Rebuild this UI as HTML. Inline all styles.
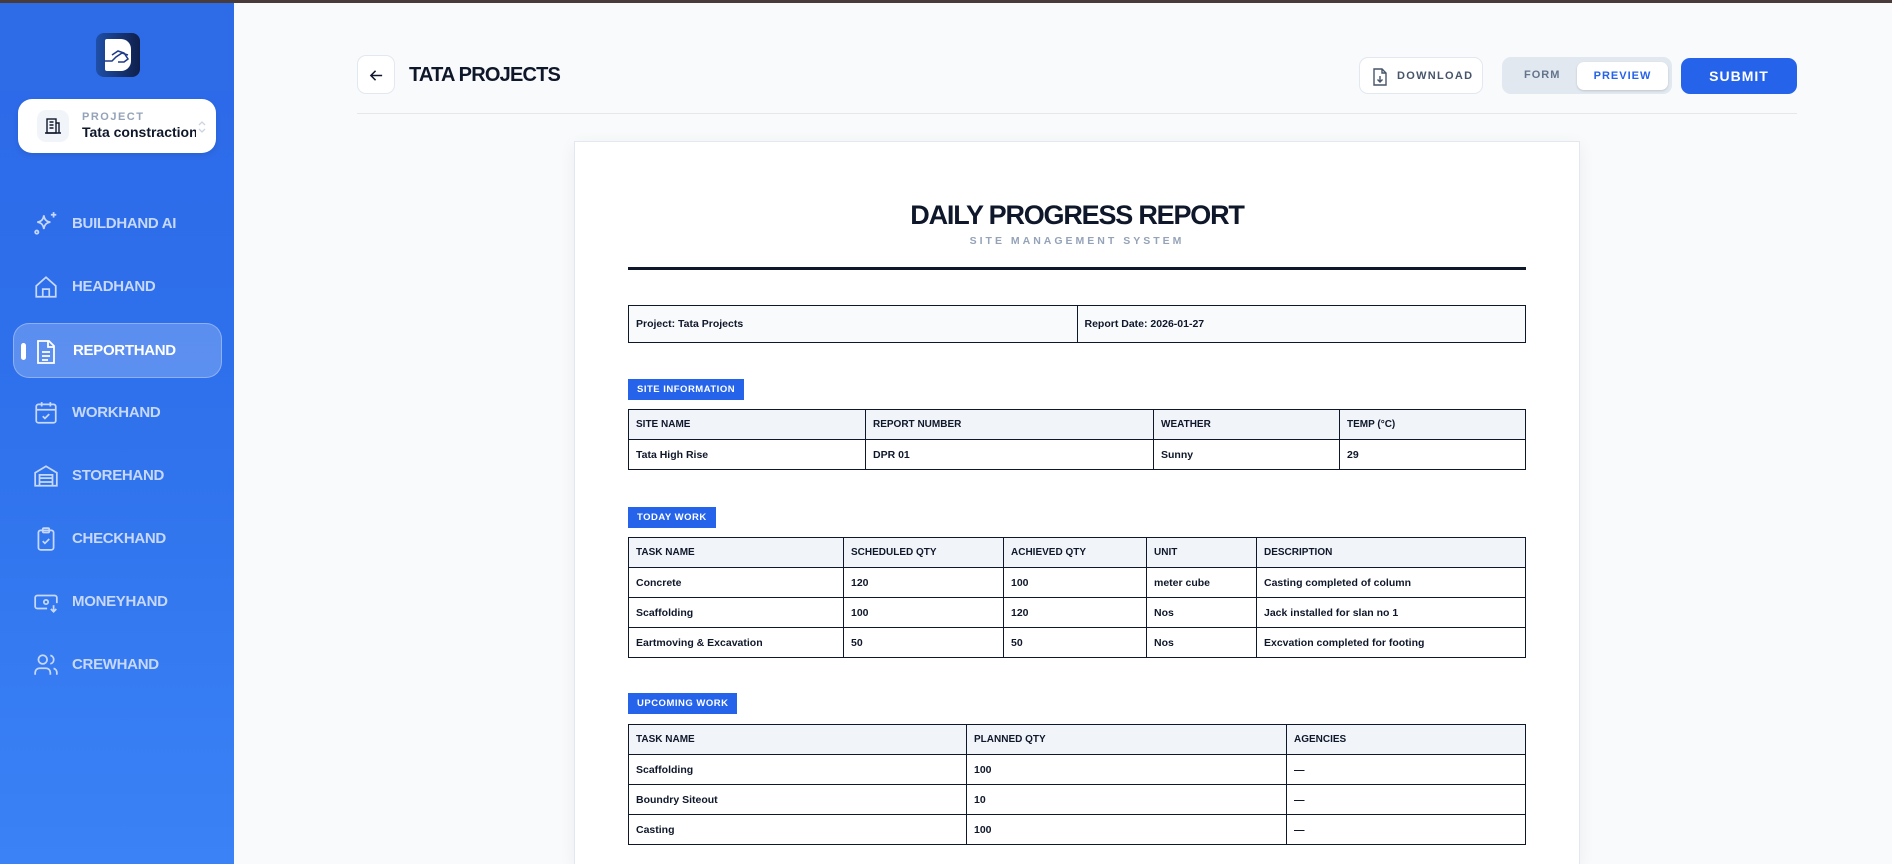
<!DOCTYPE html>
<html><head><meta charset="utf-8"><style>
*{box-sizing:border-box;margin:0;padding:0}
html{width:1892px;height:864px;overflow:hidden}
body{width:1892px;height:864px;overflow:hidden;background:#f8fafc;font-family:"Liberation Sans",Arial,sans-serif;position:relative}
.topbar{position:absolute;left:0;top:0;width:1892px;height:3px;background:#4a3b3b}
.side{position:absolute;left:0;top:3px;width:234px;height:861px;background:linear-gradient(180deg,#2c68e8 0%,#2f72ec 50%,#3b82f6 100%)}
.side .band{position:absolute;left:0;top:0;width:234px;height:88px;background:#2e6be6}
.logo{position:absolute;left:96px;top:30px;width:44px;height:44px;border-radius:8px;background:linear-gradient(90deg,#1e4fa8,#0f1f4a);overflow:hidden}
.proj{position:absolute;left:18px;top:96px;width:198px;height:54px;background:#fff;border-radius:14px;box-shadow:0 2px 6px rgba(0,0,0,.1)}
.proj .ic{position:absolute;left:19px;top:11px;width:32px;height:32px;border-radius:9px;background:#f1f5f9}
.proj .l1{position:absolute;left:64px;top:12px;font-size:11px;font-weight:bold;letter-spacing:1.5px;color:#94a3b8}
.proj .l2{position:absolute;left:64px;top:25px;font-size:14px;font-weight:bold;color:#0f172a;width:114px;overflow:hidden;white-space:nowrap}
.nav{position:absolute;left:0;width:234px;height:40px}
.nav svg{position:absolute;left:33px;top:8px}
.nav span{position:absolute;left:72px;top:12px;font-size:15px;font-weight:bold;color:#c7d8fb;letter-spacing:-.3px}
.nav.act{left:13px;width:209px;height:55px;background:rgba(255,255,255,.22);border:1px solid rgba(255,255,255,.3);border-radius:16px}
.nav.act span{color:#fff;left:59px;top:18px}
.nav.act svg{left:20px;top:15px}
.nav.act i{position:absolute;left:7px;top:19px;width:5px;height:17px;background:#fff;border-radius:3px}
.back{position:absolute;left:357px;top:55px;width:38px;height:39px;border:1px solid #e2e8f0;border-radius:9px;background:#fff}
.title{position:absolute;left:409px;top:64px;font-size:20px;font-weight:bold;color:#0f172a;letter-spacing:-.8px}
.dl{position:absolute;left:1359px;top:57px;width:124px;height:37px;border:1px solid #e2e8f0;border-radius:9px;background:#fff}
.dl span{position:absolute;left:37px;top:12px;font-size:11px;font-weight:bold;letter-spacing:1.3px;color:#475569}
.tog{position:absolute;left:1502px;top:57px;width:170px;height:37px;background:#e2e8f0;border-radius:9px}
.tog .f{position:absolute;left:22px;top:12px;font-size:11px;font-weight:bold;letter-spacing:1px;color:#64748b}
.tog .p{position:absolute;left:75px;top:5px;width:91px;height:28px;background:#fff;border-radius:7px;box-shadow:0 1px 2px rgba(0,0,0,.15);font-size:11px;font-weight:bold;letter-spacing:1px;color:#2563eb;text-align:center;line-height:28px}
.sub{position:absolute;left:1681px;top:58px;width:116px;height:36px;background:#2563eb;border-radius:9px;color:#fff;font-size:14px;font-weight:bold;letter-spacing:1px;text-align:center;line-height:36px}
.hr{position:absolute;left:357px;top:113px;width:1440px;height:1px;background:#e5e7eb}
.paper{position:absolute;left:574px;top:141px;width:1006px;height:723px;background:#fff;border:1px solid #e2e8f0;border-bottom:none;box-shadow:0 4px 16px rgba(0,0,0,.06);overflow:hidden}
.h1{position:absolute;left:0;width:100%;top:58px;text-align:center;font-size:27px;font-weight:bold;color:#0f172a;letter-spacing:-1.2px}
.h2{position:absolute;left:0;width:100%;top:93px;text-align:center;font-size:10.5px;font-weight:bold;color:#94a3b8;letter-spacing:3px}
.thick{position:absolute;left:53px;top:125px;width:898px;height:3px;background:#0f172a}
table{position:absolute;left:53px;width:898px;border-collapse:collapse;font-size:10.5px;color:#0f172a}
td{border:1.5px solid #0f172a;padding:0 7px;height:30px;font-weight:bold}
tr.hd td{background:#f1f5f9;font-size:10px}
.lbl{position:absolute;left:53px;height:21px;background:#2563eb;color:#fff;font-size:9.5px;font-weight:bold;letter-spacing:.5px;line-height:21px;padding:0 9px}
</style></head><body>
<div class="topbar"></div>
<div class="side"><div class="band"></div>
<div class="logo"><div style="position:absolute;left:9px;top:6px;width:26px;height:32px;background:#fff;border-radius:2px 10px 10px 2px"></div>
<svg style="position:absolute;left:6px;top:14px" width="32" height="18" viewBox="0 0 32 18"><path d="M2 14 L10 14 L14 10 L20 6 L26 8 M10 8 L16 4 L22 6 L26 12 L22 15 L16 15" fill="none" stroke="#1e3a8a" stroke-width="1.5"/></svg></div>
<div class="proj"><div class="ic"><svg width="32" height="32" viewBox="0 0 32 32"><rect x="10" y="9" width="9" height="14" fill="none" stroke="#0f172a" stroke-width="1.4"/><path d="M19 13h3v10h-3M8 23h16M12.5 12h4M12.5 15h4M12.5 18h4" stroke="#0f172a" stroke-width="1.4" fill="none"/></svg></div>
<div class="l1">PROJECT</div><div class="l2">Tata constraction</div>
<svg style="position:absolute;left:179px;top:20px" width="10" height="16" viewBox="0 0 10 16"><path d="M2 6l3-3 3 3M2 10l3 3 3-3" fill="none" stroke="#cbd5e1" stroke-width="1.3"/></svg></div>

<div class="nav" style="top:200px"><svg width="26" height="26" viewBox="0 0 24 24" fill="none" stroke="#c7d8fb" stroke-width="1.6"><path d="M10 4c.6 4 2.3 5.7 6 6.3-3.7.6-5.4 2.3-6 6.3-.6-4-2.3-5.7-6-6.3 3.7-.6 5.4-2.3 6-6.3z"/><path d="M19 1v5M16.5 3.5h5"/><circle cx="3.5" cy="19.5" r="1.5"/></svg><span>BUILDHAND AI</span></div>
<div class="nav" style="top:263px"><svg width="26" height="26" viewBox="0 0 24 24" fill="none" stroke="#c7d8fb" stroke-width="1.6"><path d="M3 11l9-8 9 8v10H3z"/><path d="M9 21v-7h6v7"/></svg><span>HEADHAND</span></div>
<div class="nav act" style="top:320px"><i></i><svg width="24" height="26" viewBox="0 0 24 26" fill="none" stroke="#fff" stroke-width="1.8"><path d="M4 2h11l5 5v17H4z"/><path d="M14 2v6h6M8 13h8M8 17h8M8 21h6"/></svg><span>REPORTHAND</span></div>
<div class="nav" style="top:389px"><svg width="26" height="26" viewBox="0 0 24 24" fill="none" stroke="#c7d8fb" stroke-width="1.6"><rect x="3" y="4" width="18" height="17" rx="2"/><path d="M3 9h18M8 2v4M16 2v4M9 15l2 2 4-4"/></svg><span>WORKHAND</span></div>
<div class="nav" style="top:452px"><svg width="26" height="26" viewBox="0 0 24 24" fill="none" stroke="#c7d8fb" stroke-width="1.6"><path d="M2 21V9l10-6 10 6v12z"/><path d="M6 21V11h12v10M6 14h12M6 17.5h12"/></svg><span>STOREHAND</span></div>
<div class="nav" style="top:515px"><svg width="26" height="26" viewBox="0 0 24 24" fill="none" stroke="#c7d8fb" stroke-width="1.6"><rect x="5" y="4" width="14" height="18" rx="2"/><rect x="9" y="2" width="6" height="4" rx="1"/><path d="M9 14l2 2 4-4"/></svg><span>CHECKHAND</span></div>
<div class="nav" style="top:578px"><svg width="26" height="26" viewBox="0 0 24 24" fill="none" stroke="#c7d8fb" stroke-width="1.6"><path d="M13 18H4a2 2 0 0 1-2-2V8a2 2 0 0 1 2-2h16a2 2 0 0 1 2 2v5"/><circle cx="12" cy="12" r="2"/><path d="M6 12h.01M18 12h.01M19 15v6M16.5 18.5L19 21l2.5-2.5"/></svg><span>MONEYHAND</span></div>
<div class="nav" style="top:641px"><svg width="26" height="26" viewBox="0 0 24 24" fill="none" stroke="#c7d8fb" stroke-width="1.6"><circle cx="9" cy="7" r="4"/><path d="M2 21v-2a4 4 0 0 1 4-4h6a4 4 0 0 1 4 4v2M16 3.1a4 4 0 0 1 0 7.8M22 21v-2a4 4 0 0 0-3-3.9"/></svg><span>CREWHAND</span></div>
</div>

<div class="back"><svg style="position:absolute;left:11px;top:12px" width="15" height="15" viewBox="0 0 16 16" fill="none" stroke="#0f172a" stroke-width="1.6"><path d="M14 8H2M7 3L2 8l5 5"/></svg></div>
<div class="title">TATA PROJECTS</div>
<div class="dl"><svg style="position:absolute;left:12px;top:10px" width="16" height="18" viewBox="0 0 16 18" fill="none" stroke="#475569" stroke-width="1.4"><path d="M2 1h8l4 4v12H2z"/><path d="M10 1v4h4M8 8v6M5.5 11.5L8 14l2.5-2.5"/></svg><span>DOWNLOAD</span></div>
<div class="tog"><div class="f">FORM</div><div class="p">PREVIEW</div></div>
<div class="sub">SUBMIT</div>
<div class="hr"></div>

<div class="paper">
<div class="h1">DAILY PROGRESS REPORT</div>
<div class="h2">SITE MANAGEMENT SYSTEM</div>
<div class="thick"></div>
<table style="top:163px"><tr><td style="background:#f8fafc;height:37px;width:50%">Project: Tata Projects</td><td style="background:#f8fafc">Report Date: 2026-01-27</td></tr></table>
<div class="lbl" style="top:237px">SITE INFORMATION</div>
<table style="top:267px"><tr class="hd"><td style="width:237px">SITE NAME</td><td style="width:288px">REPORT NUMBER</td><td style="width:186px">WEATHER</td><td>TEMP (°C)</td></tr>
<tr><td>Tata High Rise</td><td>DPR 01</td><td>Sunny</td><td>29</td></tr></table>
<div class="lbl" style="top:365px">TODAY WORK</div>
<table style="top:395px"><tr class="hd"><td style="width:215px">TASK NAME</td><td style="width:160px">SCHEDULED QTY</td><td style="width:143px">ACHIEVED QTY</td><td style="width:110px">UNIT</td><td>DESCRIPTION</td></tr>
<tr><td>Concrete</td><td>120</td><td>100</td><td>meter cube</td><td>Casting completed of column</td></tr>
<tr><td>Scaffolding</td><td>100</td><td>120</td><td>Nos</td><td>Jack installed for slan no 1</td></tr>
<tr><td>Eartmoving &amp; Excavation</td><td>50</td><td>50</td><td>Nos</td><td>Excvation completed for footing</td></tr></table>
<div class="lbl" style="top:551px">UPCOMING WORK</div>
<table style="top:582px"><tr class="hd"><td style="width:338px">TASK NAME</td><td style="width:320px">PLANNED QTY</td><td>AGENCIES</td></tr>
<tr><td>Scaffolding</td><td>100</td><td>—</td></tr>
<tr><td>Boundry Siteout</td><td>10</td><td>—</td></tr>
<tr><td>Casting</td><td>100</td><td>—</td></tr></table>
</div>
</body></html>
